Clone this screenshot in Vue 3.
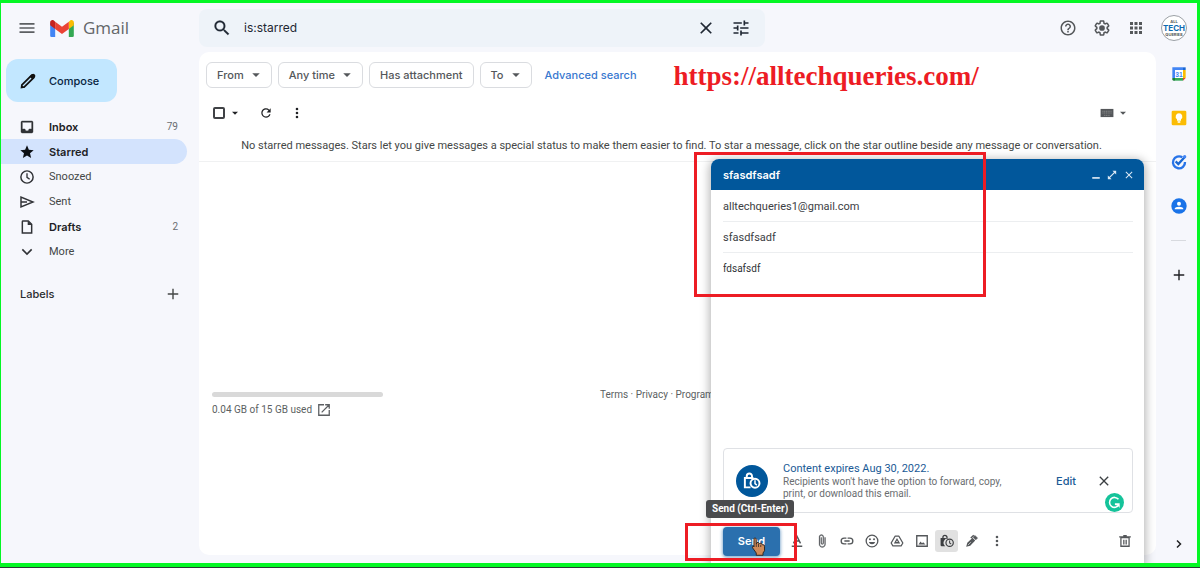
<script setup>
import { h, ref } from 'vue'

const glyphs = {
  menu: '<path d="M3 18h18v-2H3v2zm0-5h18v-2H3v2zm0-7v2h18V6H3z"/>',
  search: '<path d="M15.5 14h-.79l-.28-.27A6.471 6.471 0 0 0 16 9.5 6.5 6.5 0 1 0 9.5 16c1.61 0 3.09-.59 4.23-1.57l.27.28v.79l5 4.99L20.49 19l-4.99-5zm-6 0C7.01 14 5 11.99 5 9.5S7.01 5 9.5 5 14 7.01 14 9.5 11.99 14 9.5 14z" stroke="currentColor" stroke-width=".3"/>',
  close: '<path d="M19 6.41L17.59 5 12 10.59 6.41 5 5 6.41 10.59 12 5 17.59 6.41 19 12 13.41 17.59 19 19 17.59 13.41 12z"/>',
  tune: '<path d="M3 17v2h6v-2H3zM3 5v2h10V5H3zm10 16v-2h8v-2h-8v-2h-2v6h2zM7 9v2H3v2h4v2h2V9H7zm14 4v-2H11v2h10zm-6-4h2V7h4V5h-4V3h-2v6z"/>',
  help: '<path d="M11 18h2v-2h-2v2zm1-16C6.48 2 2 6.48 2 12s4.48 10 10 10 10-4.48 10-10S17.52 2 12 2zm0 18c-4.41 0-8-3.59-8-8s3.59-8 8-8 8 3.59 8 8-3.59 8-8 8zm0-14c-2.21 0-4 1.79-4 4h2c0-1.1.9-2 2-2s2 .9 2 2c0 2-3 1.75-3 5h2c0-2.25 3-2.5 3-5 0-2.21-1.79-4-4-4z"/>',
  gear: '<path d="M13.85 22.25h-3.7c-.74 0-1.36-.54-1.45-1.27l-.27-1.89c-.27-.14-.53-.29-.79-.46l-1.8.72c-.7.26-1.47-.03-1.81-.65L2.2 15.53c-.35-.66-.2-1.44.36-1.88l1.53-1.19c-.01-.15-.02-.3-.02-.46 0-.15.01-.31.02-.46l-1.52-1.19c-.59-.45-.74-1.26-.37-1.88l1.85-3.19c.34-.62 1.11-.9 1.79-.63l1.81.73c.26-.17.52-.32.78-.46l.27-1.91c.09-.7.71-1.25 1.44-1.25h3.7c.74 0 1.36.54 1.45 1.27l.27 1.89c.27.14.53.29.79.46l1.8-.72c.71-.26 1.48.03 1.82.65l1.84 3.18c.36.66.2 1.44-.36 1.88l-1.52 1.19c.01.15.02.3.02.46s-.01.31-.02.46l1.52 1.19c.56.45.72 1.23.37 1.86l-1.86 3.22c-.34.62-1.11.9-1.8.63l-1.8-.72c-.26.17-.52.32-.78.46l-.27 1.91c-.1.68-.72 1.22-1.46 1.22zm-3.23-2h2.76l.37-2.55.53-.22c.44-.18.88-.44 1.34-.78l.45-.34 2.38.96 1.38-2.4-2.03-1.58.07-.56c.03-.26.06-.51.06-.78s-.03-.53-.06-.78l-.07-.56 2.03-1.58-1.39-2.4-2.39.96-.45-.35c-.42-.32-.87-.58-1.33-.77l-.52-.22-.37-2.55h-2.76l-.37 2.55-.53.21c-.44.19-.88.44-1.34.79l-.45.33-2.38-.95-1.39 2.39 2.03 1.58-.07.56a7 7 0 0 0-.06.79c0 .26.02.53.06.78l.07.56-2.03 1.58 1.38 2.4 2.39-.96.45.35c.43.33.86.58 1.33.77l.53.22.38 2.55z"/><circle cx="12" cy="12" r="3.8"/>',
  apps: '<path d="M4 4h4v4H4zM10 4h4v4h-4zM16 4h4v4h-4zM4 10h4v4H4zM10 10h4v4h-4zM16 10h4v4h-4zM4 16h4v4H4zM10 16h4v4h-4zM16 16h4v4h-4z"/>',
  pen: '<path d="M5.500 20.200l-2 .4.4-3.400L16.700 4.400a1.600 1.600 0 0 1 2.200 0l.8.8a1.600 1.600 0 0 1 0 2.200L6.800 20.200z" fill="none" stroke="currentColor" stroke-width="2.400"/><path d="M14 6l3.400-3a2.400 2.400 0 0 1 3.200 0l.6.6a2.400 2.400 0 0 1 0 3.200L18 10z"/>',
  inbox: '<path fill-rule="evenodd" d="M19 3H5a2 2 0 0 0-2 2v14a2 2 0 0 0 2 2h14a2 2 0 0 0 2-2V5a2 2 0 0 0-2-2zM5 5h14v10h-4a3 3 0 0 1-6 0H5z" stroke="currentColor" stroke-width=".6"/>',
  star: '<path d="M12 17.27L18.18 21l-1.64-7.03L22 9.24l-7.19-.61L12 2 9.19 8.63 2 9.24l5.46 4.73L5.82 21z"/>',
  clock: '<circle cx="12" cy="12" r="9.200" fill="none" stroke="currentColor" stroke-width="2.200"/><path d="M12 6.500V12.500l4 3" fill="none" stroke="currentColor" stroke-width="2"/>',
  sent: '<path d="M3 4.500v15L21 12zM4 12h8" fill="none" stroke="currentColor" stroke-width="2.200"/>',
  draft: '<path d="M6 3h8l5 5v13H5V4a1 1 0 0 1 1-1z" fill="none" stroke="currentColor" stroke-width="2.200"/><path d="M13 3v6h6z"/>',
  down: '<path d="M5 8l7 7 7-7" fill="none" stroke="currentColor" stroke-width="2.400"/>',
  right: '<path d="M8 5l7 7-7 7" fill="none" stroke="currentColor" stroke-width="3"/>',
  plus: '<path d="M12 3v18M3 12h18" fill="none" stroke="currentColor" stroke-width="2.400"/>',
  caret: '<path d="M3 8h18l-9 9z"/>',
  refresh: '<path d="M17.65 6.35A7.958 7.958 0 0 0 12 4c-4.42 0-7.99 3.58-7.99 8s3.57 8 7.99 8c3.73 0 6.84-2.55 7.73-6h-2.08A5.99 5.99 0 0 1 12 18c-3.31 0-6-2.69-6-6s2.69-6 6-6c1.66 0 3.14.69 4.22 1.78L13 11h7V4z"/>',
  dots: '<circle cx="12" cy="5" r="2.200"/><circle cx="12" cy="12" r="2.200"/><circle cx="12" cy="19" r="2.200"/>',
  keyboard: '<path d="M1 5h22v14H1z"/><path d="M4 9h16M4 12h16M7 16h10" stroke="#999" stroke-width="1.200" stroke-dasharray="2 1"/>',
  open: '<path d="M12 3H3v18h18v-9M14 3h7v7M21 3L8 16" fill="none" stroke="currentColor" stroke-width="2.200"/>',
  minimize: '<path d="M3 17h18v4H3z"/>',
  expand: '<path d="M13 2h9v9zM2 13v9h9z"/><path d="M5 19L19 5" stroke="currentColor" stroke-width="3"/>',
  textcolor: '<path d="M6 16L12 4l6 12M8 12h8M3 21h18" fill="none" stroke="currentColor" stroke-width="2.400"/>',
  clip: '<path d="M16.500 6v11.500c0 2.210-1.790 4-4 4s-4-1.790-4-4V5a2.500 2.500 0 0 1 5 0v10.500c0 .55-.45 1-1 1s-1-.45-1-1V6H10v9.500a2.500 2.500 0 0 0 5 0V5c0-2.210-1.790-4-4-4S7 2.790 7 5v12.500c0 3.040 2.460 5.500 5.500 5.500s5.500-2.460 5.500-5.500V6z" stroke="currentColor" stroke-width=".5"/>',
  link: '<path d="M11 7H7a5 5 0 0 0 0 10h4M13 7h4a5 5 0 0 1 0 10h-4M7.500 12h9" fill="none" stroke="currentColor" stroke-width="2.300"/>',
  smile: '<circle cx="12" cy="12" r="10" fill="none" stroke="currentColor" stroke-width="2.200"/><circle cx="8.500" cy="9" r="1.700"/><circle cx="15.500" cy="9" r="1.700"/><path d="M6.500 13.500h11a5.700 5.700 0 0 1-11 0z"/>',
  drive: '<path d="M9 3.500h6l7 12-3 5H5l-3-5z" fill="none" stroke="currentColor" stroke-width="2.200" stroke-linejoin="round"/><path d="M12 9l3.500 6h-7z" fill="none" stroke="currentColor" stroke-width="2.200"/>',
  image: '<path d="M3 3h18v18H3z" fill="none" stroke="currentColor" stroke-width="2.300"/><path d="M6 18l3.500-5 2.500 3 2-2 4 4z"/>',
  lockclock: '<path d="M5 8V6a3.500 3.500 0 0 1 7 0v2" fill="none" stroke="currentColor" stroke-width="2.200"/><path d="M1 7h14.500A8 8 0 0 0 9 21H3a2 2 0 0 1-2-2z"/><circle cx="16.500" cy="15" r="6.300" fill="none" stroke="currentColor" stroke-width="2"/><path d="M16.500 11v4.500l2.800 1.800" fill="none" stroke="currentColor" stroke-width="1.800"/>',
  confidential: '<path d="M5 8V5.500a3.500 3.500 0 0 1 7 0V8M10 20.500H2.500V8H14" fill="none" stroke="currentColor" stroke-width="2.600"/><circle cx="16" cy="15" r="6" fill="none" stroke="currentColor" stroke-width="2.600"/><path d="M16 11v4.500l2.500 2" fill="none" stroke="currentColor" stroke-width="2"/>',
  signature: '<path d="M2 22l2-7L13 6.500l4.500 4.500L9 20z"/><path d="M14 5.500l3-3 4.500 4.500-3 3z" stroke="currentColor"/><path d="M10 7l5-5" stroke="currentColor" stroke-width="2.400"/><path d="M5 19l5-5" stroke="#fff"/>',
  trash: '<path d="M5 6h14v15H5zM2 5h20M9 3h6M10 10v8M14 10v8" fill="none" stroke="currentColor" stroke-width="2.200"/>',
  gmail: '<path d="M1 5v14.500A1.500 1.500 0 0 0 2.500 21h4V9.500z" fill="#4285f4"/><path d="M27 5v14.500a1.500 1.500 0 0 1-1.500 1.500h-4V9.500z" fill="#34a853"/><path d="M21.500 4L23 2.800c1.700-1.300 4-.2 4 2V8l-5.500 4z" fill="#fbbc04"/><path d="M6.500 12V4L14 9.500 21.500 4v8L14 17.500z" fill="#ea4335"/><path d="M6.500 4L5 2.800C3.300 1.500 1 2.600 1 4.800V8l5.500 4z" fill="#c5221f"/>',
  calendar: '<path d="M2 2h16v4H6v12H2z" fill="#4285f4"/><path d="M18 2h4v4h-4z" fill="#1967d2"/><path d="M18 6h4v12h-4z" fill="#fbbc04"/><path d="M6 18h12v4H6z" fill="#34a853"/><path d="M2 18h4v4H4a2 2 0 0 1-2-2z" fill="#188038"/><path d="M18 18h4l-4 4z" fill="#ea4335"/><path d="M6 6h12v12H6z" fill="#fff"/><text x="12" y="16" text-anchor="middle" font-family="Liberation Sans, sans-serif" font-size="10" font-weight="700" fill="#4285f4">31</text>',
  keep: '<rect x="1" y="1" width="22" height="22" rx="2" fill="#fbbc04"/><path d="M12 5a5 5 0 0 0-3 9v2h6v-2a5 5 0 0 0-3-9zM10 17h4v2h-4z" fill="#fff"/>',
  tasks: '<path d="M17 5a9 9 0 1 0 4 7" fill="none" stroke="#2874e8" stroke-width="3.500"/><path d="M7 11l4 4L21 4" fill="none" stroke="#1967d2" stroke-width="3.500"/><circle cx="20.500" cy="4" r="2.500" fill="#4285f4"/>',
  contacts: '<circle cx="12" cy="12" r="11.500" fill="#1a73e8"/><circle cx="12" cy="8.500" r="3" fill="#fff"/><path d="M5.500 17v-1c0-4 13-4 13 0v1z" fill="#fff"/>',
  grammar: '<circle cx="12" cy="12" r="12" fill="#15c39a"/><path d="M17 8a6.300 6.300 0 1 0 .5 7" fill="none" stroke="#fff" stroke-width="2"/><path d="M12.500 13h6v6l-2-3-4-1z" fill="#fff"/>',
  hand: '<path d="M5 1c1.500 0 2 1 2 2v6l1-2h2l1 2 1-1h2l1 2h2l1 2v6l-2 3v3H7v-3l-5-7c-.5-2 1-3 2-1V3c0-1 0-2 1-2z" fill="#cf8a59" stroke="#2d211c" stroke-width="1.200"/><path d="M7 9v4M10 9v4M13 10v3" stroke="#2d211c"/>'
}
const boxes = { gmail: '0 0 28 22', hand: '0 0 20 26' }
const Icon = (props) =>
  h('svg', { viewBox: boxes[props.name] || '0 0 24 24', fill: 'currentColor', 'aria-hidden': 'true', innerHTML: glyphs[props.name] })
Icon.props = ['name']

const folders = [
  { icon: 'inbox', label: 'Inbox', count: 79, bold: true },
  { icon: 'star', label: 'Starred', bold: true, active: true },
  { icon: 'clock', label: 'Snoozed' },
  { icon: 'sent', label: 'Sent' },
  { icon: 'draft', label: 'Drafts', count: 2, bold: true },
  { icon: 'down', label: 'More' }
]
const chips = [
  { label: 'From', menu: true },
  { label: 'Any time', menu: true },
  { label: 'Has attachment' },
  { label: 'To', menu: true }
]
const tools = [
  ['textcolor', 'Formatting options'], ['clip', 'Attach files'], ['link', 'Insert link'],
  ['smile', 'Insert emoji'], ['drive', 'Insert from Drive'], ['image', 'Insert photo'],
  ['lockclock', 'Confidential mode'], ['signature', 'Insert signature'], ['dots', 'More options']
]
const query = ref('is:starred')
const to = ref('alltechqueries1@gmail.com')
const subject = ref('sfasdfsadf')
const message = ref('fdsafsdf')
</script>

<template>
  <div class="frame">
    <header class="top">
      <div class="brand">
        <button class="bare" aria-label="Main menu"><Icon name="menu" class="i20" /></button>
        <Icon name="gmail" class="logo" />
        <span class="wordmark">Gmail</span>
      </div>
      <form class="search" @submit.prevent>
        <button class="bare" aria-label="Search"><Icon name="search" class="i20" /></button>
        <input v-model="query" type="text" aria-label="Search mail" />
        <button class="bare" type="button" aria-label="Clear search"><Icon name="close" class="i20" /></button>
        <button class="bare" type="button" aria-label="Search options"><Icon name="tune" class="i20" /></button>
      </form>
      <div class="account">
        <button class="bare" aria-label="Support"><Icon name="help" class="i18" /></button>
        <button class="bare" aria-label="Settings"><Icon name="gear" class="i18" /></button>
        <button class="bare" aria-label="Google apps"><Icon name="apps" class="i18" /></button>
        <button class="avatar" aria-label="Account"><small>ALL</small><b>TECH</b><small>QUERIES</small></button>
      </div>
    </header>

    <div class="columns">
      <nav class="side">
        <button class="compose-btn"><Icon name="pen" class="i18" />Compose</button>
        <ul>
          <li v-for="f in folders" :key="f.label">
            <a href="#" class="folder" :class="{ bold: f.bold, active: f.active }">
              <Icon :name="f.icon" class="i16" /><span>{{ f.label }}</span><small v-if="f.count">{{ f.count }}</small>
            </a>
          </li>
        </ul>
        <div class="labels"><h2>Labels</h2><button class="bare" aria-label="Create label"><Icon name="plus" class="i14" /></button></div>
      </nav>

      <main class="panel">
        <div class="chips">
          <button v-for="c in chips" :key="c.label" class="chip">{{ c.label }}<Icon v-if="c.menu" name="caret" class="i10" /></button>
          <a href="#" class="advanced">Advanced search</a>
          <p class="site">https://alltechqueries.com/</p>
        </div>
        <div class="toolbar">
          <input type="checkbox" aria-label="Select all" />
          <button class="bare" aria-label="Select"><Icon name="caret" class="i8" /></button>
          <button class="bare reload" aria-label="Refresh"><Icon name="refresh" class="i14" /></button>
          <button class="bare more" aria-label="More"><Icon name="dots" class="i14" /></button>
          <button class="bare keys" aria-label="Input tools"><Icon name="keyboard" class="i14" /><Icon name="caret" class="i8" /></button>
        </div>
        <p class="empty">No starred messages. Stars let you give messages a special status to make them easier to find. To star a message, click on the star outline beside any message or conversation.</p>
        <footer class="foot">
          <div class="storage">
            <div class="meter"></div>
            <a href="#">0.04 GB of 15 GB used <Icon name="open" class="i14" /></a>
          </div>
          <p>Terms · Privacy · Program</p>
        </footer>
      </main>

      <aside class="rail">
        <button class="bare" aria-label="Calendar"><Icon name="calendar" class="i16" /></button>
        <button class="bare" aria-label="Keep"><Icon name="keep" class="i16" /></button>
        <button class="bare" aria-label="Tasks"><Icon name="tasks" class="i16" /></button>
        <button class="bare" aria-label="Contacts"><Icon name="contacts" class="i16" /></button>
        <hr />
        <button class="bare dark" aria-label="Get add-ons"><Icon name="plus" class="i14" /></button>
        <button class="bare dark hide" aria-label="Hide side panel"><Icon name="right" class="i12" /></button>
      </aside>
    </div>

    <section class="draft">
      <header>
        <h2>sfasdfsadf</h2>
        <button class="bare" aria-label="Minimize"><Icon name="minimize" class="i10" /></button>
        <button class="bare" aria-label="Full screen"><Icon name="expand" class="i10" /></button>
        <button class="bare" aria-label="Close"><Icon name="close" class="i12" /></button>
      </header>
      <input v-model="to" type="text" aria-label="To" />
      <input v-model="subject" type="text" aria-label="Subject" />
      <textarea v-model="message" aria-label="Message body"></textarea>
      <div class="expiry">
        <span class="badge"><Icon name="confidential" class="i18" /></span>
        <div class="note">
          <strong>Content expires Aug 30, 2022.</strong>
          <p>Recipients won't have the option to forward, copy, print, or download this email.</p>
        </div>
        <button class="edit">Edit</button>
        <button class="bare" aria-label="Remove expiry"><Icon name="close" class="i16" /></button>
        <Icon name="grammar" class="grammar" />
      </div>
      <div class="actions">
        <button class="send">Send</button>
        <button v-for="t in tools" :key="t[0]" class="tool" :class="{ on: t[0] === 'lockclock' }" :aria-label="t[1]"><Icon :name="t[0]" class="i14" /></button>
        <button class="tool discard" aria-label="Discard draft"><Icon name="trash" class="i14" /></button>
      </div>
      <span class="tip" role="tooltip">Send (Ctrl-Enter)</span>
      <div class="mark mark-fields"></div>
      <div class="mark mark-send"></div>
      <Icon name="hand" class="hand" />
    </section>
  </div>
</template>

<style>
body { margin: 0; background: #2b3a35; }
</style>

<style scoped>
* { box-sizing: border-box; }
.frame {
  --wide: Inter, "Noto Sans", sans-serif;
  position: relative; display: flex; flex-direction: column; min-height: calc(100vh - 1px); margin-bottom: 1px;
  border: solid #04f724; border-width: 3px 3px 4px 1px; background: #f6f7fc; overflow: hidden;
  color: #444746; font: 11px/16px Roboto, "Noto Sans", sans-serif;
}
button, input, textarea { font: inherit; color: inherit; }
ul, p, h2 { margin: 0; padding: 0; }
ul { list-style: none; }
a { color: inherit; text-decoration: none; }
svg { display: block; flex: none; }
.bare { display: flex; align-items: center; padding: 0; border: 0; background: none; }
.i8 { width: 8px; height: 8px; } .i10 { width: 10px; height: 10px; } .i12 { width: 12px; height: 12px; }
.i14 { width: 14px; height: 14px; } .i16 { width: 16px; height: 16px; } .i18 { width: 18px; height: 18px; } .i20 { width: 20px; height: 20px; }

.top { display: flex; align-items: center; height: 49px; }
.brand { display: flex; align-items: center; width: 198px; padding-left: 16px; color: #5c5f62; }
.logo { width: 26px; height: 20px; margin-left: 12px; }
.wordmark { margin-left: 8px; font: 17px/24px "Open Sans", sans-serif; color: #636669; }
.search { display: flex; align-items: center; flex: 0 1 566px; height: 38px; padding: 0 14px 0 13px; border-radius: 8px; background: #eef3f9; color: #1f2733; }
.search input { flex: 1; min-width: 0; margin-left: 12px; padding: 0; border: 0; outline: 0; background: none; font: 12px/18px var(--wide); }
.search button + button { margin-left: 15px; }
.account { display: flex; align-items: center; gap: 16px; margin-left: auto; padding-right: 10px; color: #54575a; }
.avatar { display: flex; flex-direction: column; align-items: center; justify-content: center; width: 26px; height: 26px; padding: 0; border: 1px solid #9ba0a5; border-radius: 50%; background: #fff; overflow: hidden; font-family: var(--wide); }
.avatar small { font-size: 4px; font-weight: 700; line-height: 5px; }
.avatar b { font-size: 8px; line-height: 8px; color: #0e6ab0; }

.columns { display: flex; flex: 1; }
.side { width: 198px; }
.compose-btn { display: flex; align-items: center; gap: 12px; height: 43px; margin: 7px 0 12px 5px; padding: 0 18px 0 13px; border: 0; border-radius: 12px; background: #c2e7ff; color: #062440; font: 500 11px/16px var(--wide); }
.compose-btn svg { color: #111; }
.folder { display: flex; align-items: center; gap: 14px; height: 25px; margin-right: 12px; padding: 0 9px 0 18px; border-radius: 0 13px 13px 0; }
.folder span { flex: 1; }
.folder svg { color: #303236; }
.folder small { font-size: 10px; color: #6a6d70; }
.folder.bold span { font: 600 11px/16px var(--wide); color: #202124; }
.active { background: #d3e3fd; }
.folder.active svg { color: #0b0f14; }
.labels { display: flex; justify-content: space-between; align-items: center; margin-top: 20px; padding: 0 19px 0 19px; }
.labels h2 { font: 500 11px/20px var(--wide); color: #2a2c2e; }

.panel { flex: 1; min-width: 0; margin-bottom: 8px; border-radius: 10px; background: #fff; }
.chips { display: flex; align-items: center; gap: 6px; padding: 8px 0 0 7px; }
.chip { display: flex; align-items: center; gap: 7px; height: 26px; padding: 0 10px; border: 1px solid #dadce0; border-radius: 6px; background: #fff; color: #54575a; font: 500 11px/16px var(--wide); white-space: nowrap; }
.advanced { margin-left: 7px; color: #3878cf; font: 500 11px/16px var(--wide); white-space: nowrap; }
.site { margin-left: 31px; padding-top: 3px; font: 700 27px/26px "Liberation Serif", serif; color: #ed1c24; white-space: nowrap; }
.toolbar { display: flex; align-items: center; height: 47px; padding: 0 29px 0 14px; color: #202124; }
.toolbar input { appearance: none; width: 12px; height: 12px; margin: 0 6px 0 0; border: 2px solid #404246; border-radius: 2px; }
.reload { margin-left: 20px; }
.more { margin-left: 17px; }
.keys { gap: 5px; margin-left: auto; color: #54575a; }
.empty { height: 26px; padding: 0 24px 0 12px; border-bottom: 1px solid #f0f1f2; line-height: 20px; text-align: center; white-space: nowrap; }
.foot { display: grid; grid-template-columns: 171px 1fr; gap: 217px; margin-top: 226px; padding-left: 13px; font-size: 10px; line-height: 14px; color: #5c5f62; white-space: nowrap; }
.meter { height: 5px; margin: 4px 0 6px; border-radius: 3px; background: #d9d9d9; }
.storage a { display: flex; gap: 5px; }

.rail { display: flex; flex-direction: column; align-items: center; gap: 28px; width: 41px; padding: 14px 0 13px 4px; }
.rail hr { width: 15px; margin: -2px 0 -1px; border: 0; border-top: 1px solid #d8dadf; }
.rail .dark { color: #202124; }
.rail .hide { margin-top: auto; }

.draft {
  position: absolute; top: 156px; right: 53px; bottom: 0; display: flex; flex-direction: column; width: 433px; padding: 0 11px 0 12px;
  border-radius: 8px 8px 0 0; background: #fff; box-shadow: 0 2px 10px 2px rgba(0, 0, 0, .28); color: #3c4043;
}
.draft header { display: flex; align-items: center; gap: 6px; height: 31px; margin: 0 -11px 1px -12px; padding: 0 9px 0 12px; border-radius: 8px 8px 0 0; background: #01579b; color: #dce9f5; }
.draft h2 { flex: 1; font: 600 11px/16px var(--wide); color: #fff; }
.draft > input { height: 31px; padding: 0; border: 0; border-bottom: 1px solid #eceef0; outline: 0; background: none; }
.draft textarea { flex: 1; min-height: 60px; padding: 8px 0; border: 0; outline: 0; resize: none; background: none; font-size: 10px; color: #303236; }
.expiry { position: relative; display: flex; align-items: center; height: 65px; padding: 0 20px 0 12px; border: 1px solid #dfe1e5; border-radius: 4px; }
.badge { display: flex; align-items: center; justify-content: center; flex: none; width: 32px; height: 32px; border-radius: 50%; background: #01579b; color: #fff; }
.note { flex: 1; margin-left: 15px; font-size: 10px; line-height: 12px; color: #6a6d70; }
.note p { max-width: 224px; }
.note strong { display: block; font-size: 11px; line-height: 14px; font-weight: 400; color: #1a5a96; }
.edit { margin-right: 20px; padding: 0; border: 0; background: none; color: #1a5a96; font: 500 11px/16px var(--wide); }
.grammar { position: absolute; right: 8px; bottom: 0; width: 19px; height: 19px; }
.actions { display: flex; align-items: center; height: 50px; padding-top: 6px; }
.send { flex: none; width: 57px; height: 29px; margin-right: 5px; padding: 0; border: 0; border-radius: 4px; background: #2b70ae; box-shadow: 0 1px 3px 1px rgba(43, 112, 174, .5); color: #fff; font: 600 11px/16px var(--wide); }
.tool { display: flex; align-items: center; justify-content: center; flex: none; width: 23px; height: 22px; margin-right: 2px; padding: 0; border: 0; border-radius: 3px; background: none; color: #54575a; }
.tool.on { background: #e1e1e1; color: #3c3e41; }
.discard { margin: 0 -3px 0 auto; }
.tip { position: absolute; left: -5px; bottom: 45px; padding: 0 6px; border-radius: 3px; background: #4a4b4d; color: #fff; font-size: 10px; font-weight: 700; line-height: 18px; white-space: nowrap; }
.mark { position: absolute; border: 3px solid #ed1c24; pointer-events: none; }
.mark-fields { top: -7px; left: -17px; width: 292px; height: 145px; }
.mark-send { bottom: 2px; left: -26px; width: 112px; height: 38px; }
.hand { position: absolute; left: 40px; bottom: 6px; width: 15px; height: 20px; }
</style>
